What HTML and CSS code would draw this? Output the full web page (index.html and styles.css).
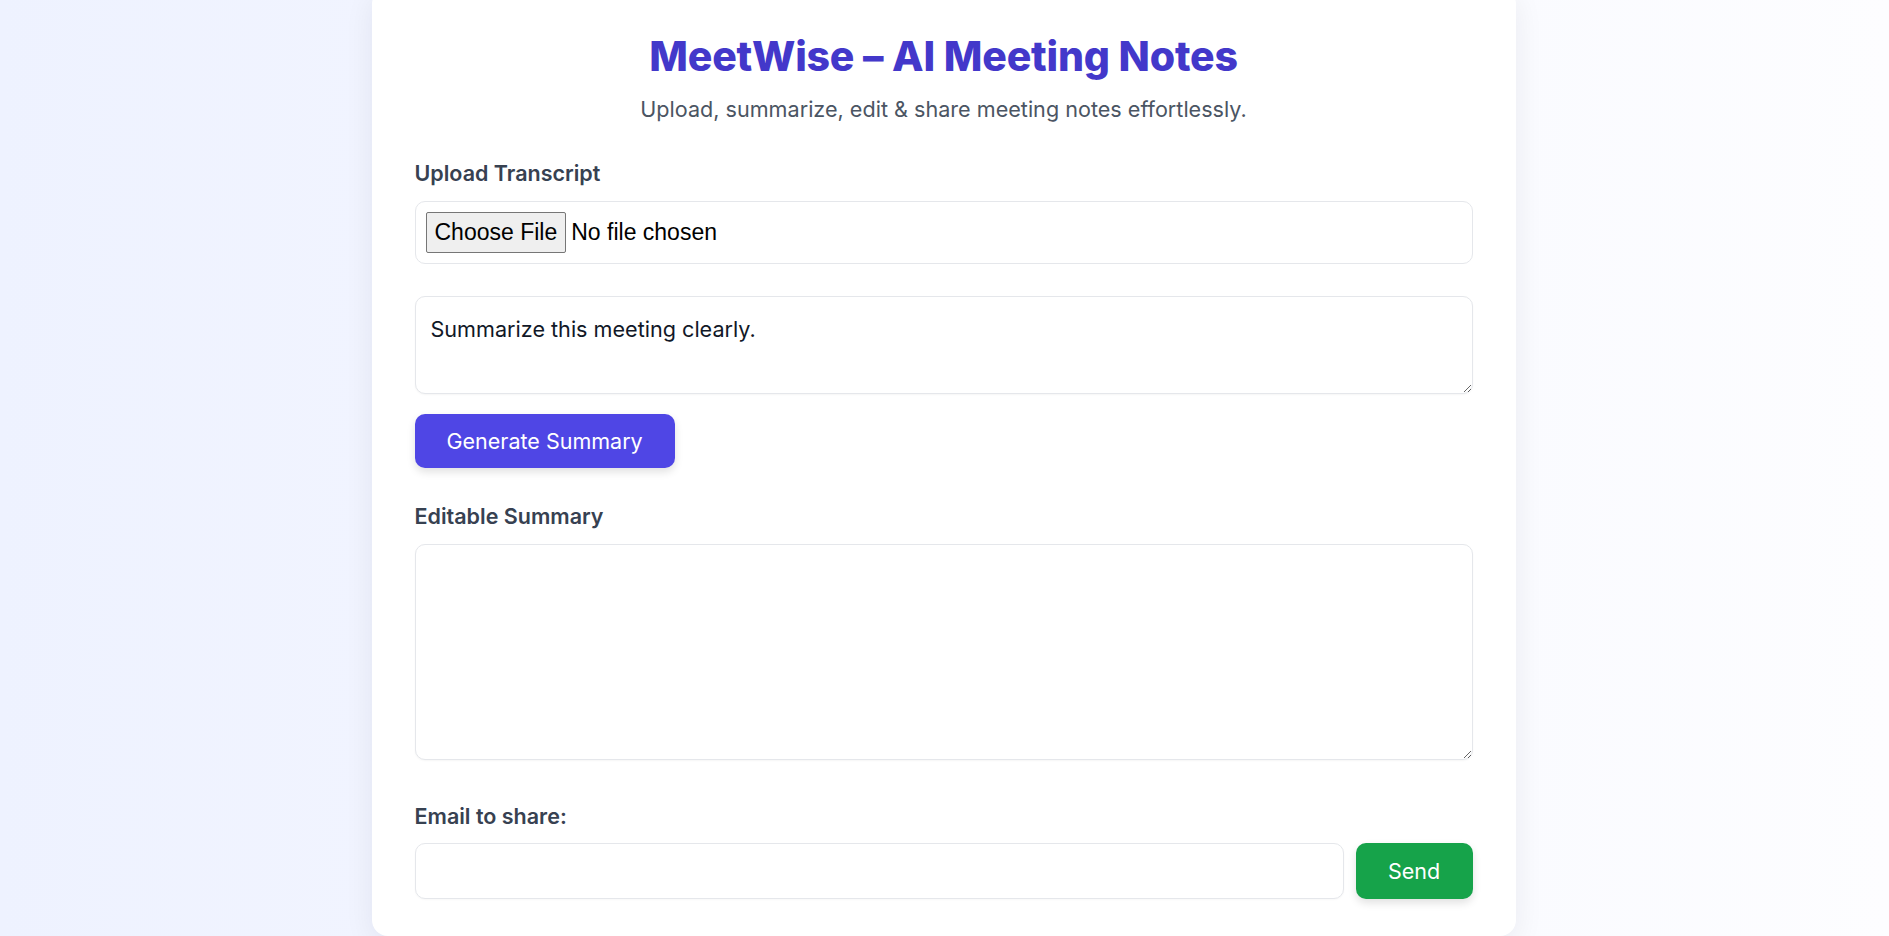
FILE: index.html
```html
<!DOCTYPE html>
<html lang="en">
<head>
<meta charset="utf-8">
<title>MeetWise – AI Meeting Notes</title>
<link rel="stylesheet" href="styles.css">
</head>
<body>
  <main class="card">
    <header class="head">
      <h1 class="title">MeetWise – AI Meeting Notes</h1>
      <p class="subtitle">Upload, summarize, edit &amp; share meeting notes effortlessly.</p>
    </header>

    <section class="block block-upload">
      <label class="label" for="file">Upload Transcript</label>
      <input class="file" id="file" type="file">
    </section>

    <section class="block block-prompt">
      <textarea class="area area-prompt">Summarize this meeting clearly.</textarea>
      <button class="btn btn-primary" type="button">Generate Summary</button>
    </section>

    <section class="block block-summary">
      <label class="label" for="summary">Editable Summary</label>
      <textarea class="area area-summary" id="summary"></textarea>
    </section>

    <section class="block block-email">
      <label class="label label-email" for="email">Email to share:</label>
      <div class="email-row">
        <input class="email" id="email" type="email">
        <button class="btn btn-send" type="button">Send</button>
      </div>
    </section>
  </main>
</body>
</html>
```

FILE: styles.css
```css
* { box-sizing: border-box; }

html, body {
  margin: 0;
  padding: 0;
}

body {
  height: 936px;
  overflow: hidden;
  padding-right: 2px;
  background: linear-gradient(to right, #eef2ff 0%, #f1f4ff 20%, #fafbff 80%, #fdfdff 100%);
  font-family: Inter, "Noto Sans", sans-serif;
  color: #111827;
}

.card {
  width: 1144px;
  margin: -12px auto 0;
  padding: 43px 43px 37px;
  background: #ffffff;
  border-radius: 16px;
  box-shadow: 0 8px 30px rgba(15, 23, 42, 0.07);
}

.head {
  text-align: center;
}

.title {
  margin: 0;
  font-size: 41px;
  line-height: 50px;
  font-weight: 800;
  color: #4338ca;
  letter-spacing: -0.2px;
}

.subtitle {
  margin: 13px 0 0;
  font-size: 21.6px;
  line-height: 30px;
  color: #4b5563;
}

.block {
  display: flex;
  flex-direction: column;
  align-items: stretch;
}

.label {
  display: block;
  font-size: 21.5px;
  line-height: 30px;
  font-weight: 600;
  color: #374151;
  margin-bottom: 13px;
}

.label-email { margin-bottom: 12px; }

.block-upload { margin-top: 34px; }
.block-prompt { margin-top: 32px; }
.block-summary { margin-top: 32.5px; }
.block-email { margin-top: 41px; }

.file {
  display: block;
  width: 100%;
  padding: 10px 11px 10px 10px;
  border: 1px solid #e5e7eb;
  border-radius: 10px;
  background: #fff;
  font-family: "Liberation Sans", Arial, sans-serif;
  font-size: 23px;
  color: #000;
}

.file::file-selector-button {
  font: inherit;
  color: #000;
  padding: 6px 8px;
  margin-right: 5px;
  border: 1px solid #767676;
  border-radius: 2px;
  background: #efefef;
}

.area {
  display: block;
  width: 100%;
  padding: 16px 16px 16px 15px;
  border: 1px solid #e5e7eb;
  border-radius: 10px;
  background: #fff;
  font-family: Inter, "Noto Sans", sans-serif;
  font-size: 21.6px;
  line-height: 32px;
  color: #111827;
  box-shadow: 0 1px 2px rgba(0, 0, 0, 0.04);
  outline: none;
}

.area-prompt { height: 98px; }
.area-summary { height: 216px; }

.btn {
  font-family: Inter, "Noto Sans", sans-serif;
  font-size: 21.5px;
  font-weight: 400;
  color: #fff;
  border: none;
  border-radius: 10px;
  cursor: pointer;
  box-shadow: 0 4px 8px rgba(0, 0, 0, 0.12);
}

.btn-primary {
  align-self: flex-start;
  margin-top: 20px;
  height: 54px;
  padding: 0 32px;
  background: #4f46e5;
}

.email-row {
  display: flex;
  gap: 12px;
}

.email {
  flex: 1;
  height: 56px;
  padding: 0 16px;
  border: 1px solid #e5e7eb;
  border-radius: 10px;
  font-family: Inter, "Noto Sans", sans-serif;
  font-size: 21.6px;
  box-shadow: 0 1px 2px rgba(0, 0, 0, 0.03);
  outline: none;
}

.btn-send {
  width: 117px;
  height: 56px;
  background: #16a34a;
}
```
